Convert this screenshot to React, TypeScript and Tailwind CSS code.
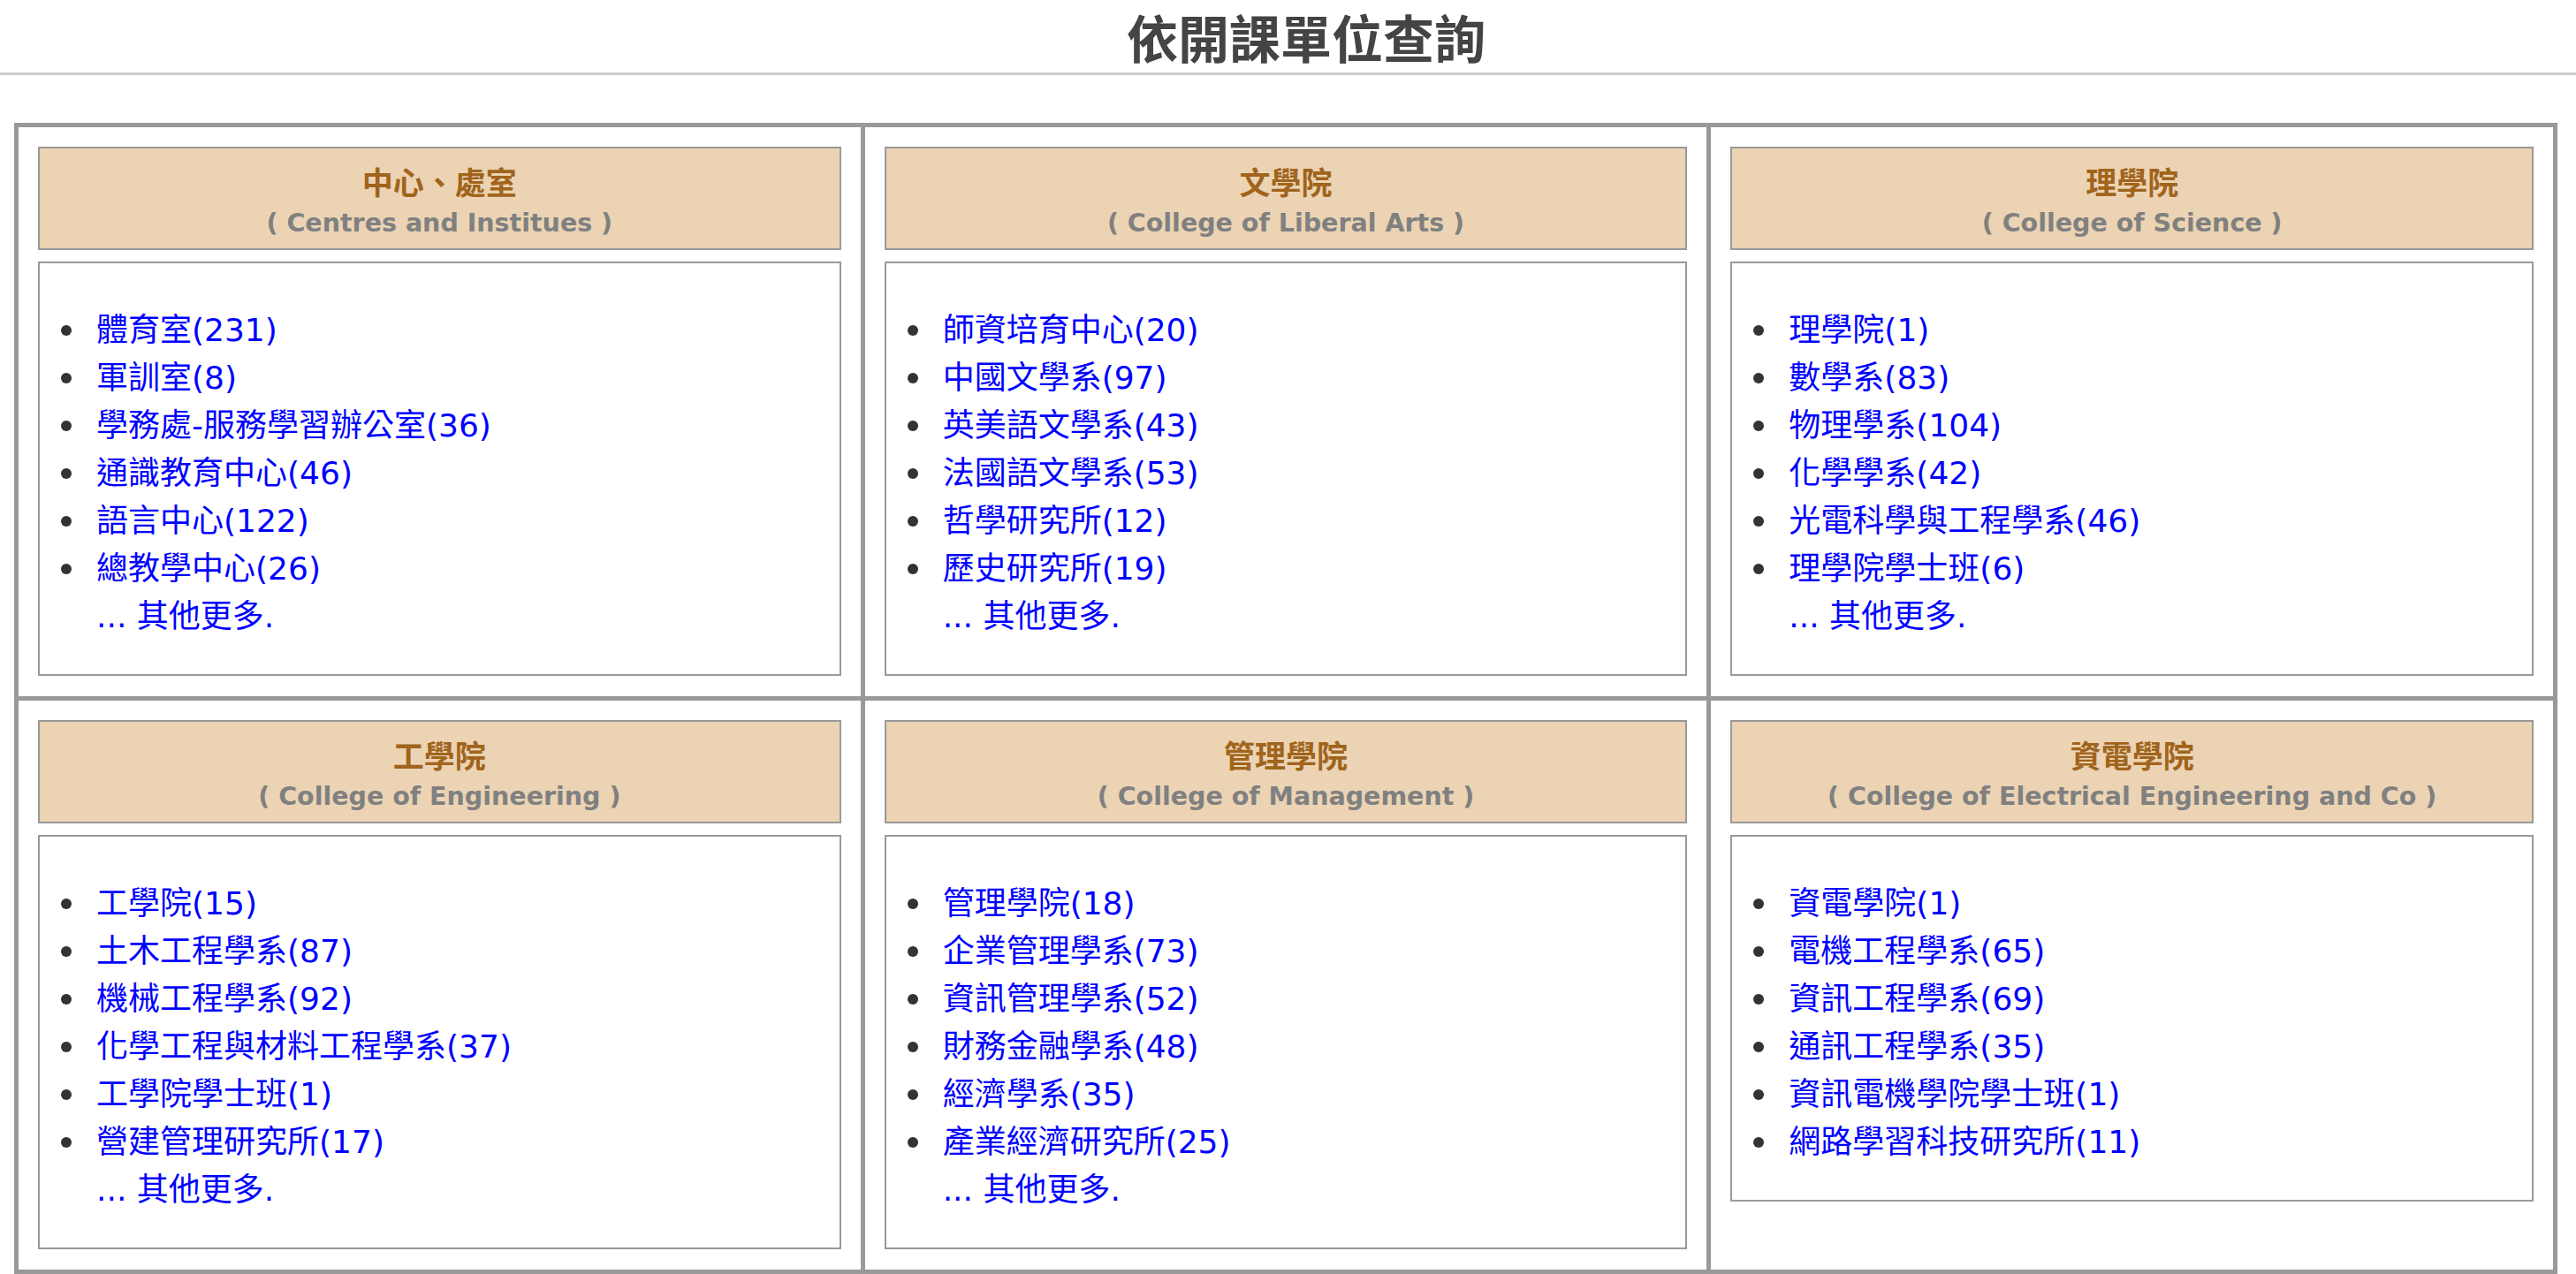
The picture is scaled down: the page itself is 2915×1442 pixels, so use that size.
type Unit = { name: string; count: number };
type College = { zh: string; en: string; units: Unit[]; more: boolean };

const colleges: College[] = [
  {
    zh: '中心、處室',
    en: 'Centres and Institues',
    more: true,
    units: [
      { name: '體育室', count: 231 },
      { name: '軍訓室', count: 8 },
      { name: '學務處-服務學習辦公室', count: 36 },
      { name: '通識教育中心', count: 46 },
      { name: '語言中心', count: 122 },
      { name: '總教學中心', count: 26 },
    ],
  },
  {
    zh: '文學院',
    en: 'College of Liberal Arts',
    more: true,
    units: [
      { name: '師資培育中心', count: 20 },
      { name: '中國文學系', count: 97 },
      { name: '英美語文學系', count: 43 },
      { name: '法國語文學系', count: 53 },
      { name: '哲學研究所', count: 12 },
      { name: '歷史研究所', count: 19 },
    ],
  },
  {
    zh: '理學院',
    en: 'College of Science',
    more: true,
    units: [
      { name: '理學院', count: 1 },
      { name: '數學系', count: 83 },
      { name: '物理學系', count: 104 },
      { name: '化學學系', count: 42 },
      { name: '光電科學與工程學系', count: 46 },
      { name: '理學院學士班', count: 6 },
    ],
  },
  {
    zh: '工學院',
    en: 'College of Engineering',
    more: true,
    units: [
      { name: '工學院', count: 15 },
      { name: '土木工程學系', count: 87 },
      { name: '機械工程學系', count: 92 },
      { name: '化學工程與材料工程學系', count: 37 },
      { name: '工學院學士班', count: 1 },
      { name: '營建管理研究所', count: 17 },
    ],
  },
  {
    zh: '管理學院',
    en: 'College of Management',
    more: true,
    units: [
      { name: '管理學院', count: 18 },
      { name: '企業管理學系', count: 73 },
      { name: '資訊管理學系', count: 52 },
      { name: '財務金融學系', count: 48 },
      { name: '經濟學系', count: 35 },
      { name: '產業經濟研究所', count: 25 },
    ],
  },
  {
    zh: '資電學院',
    en: 'College of Electrical Engineering and Co',
    more: false,
    units: [
      { name: '資電學院', count: 1 },
      { name: '電機工程學系', count: 65 },
      { name: '資訊工程學系', count: 69 },
      { name: '通訊工程學系', count: 35 },
      { name: '資訊電機學院學士班', count: 1 },
      { name: '網路學習科技研究所', count: 11 },
    ],
  },
];

function CollegeCell({ college }: { college: College }) {
  return (
    <div className="bg-white px-[22px] pt-[22px] pb-[23px]">
      {/* College title */}
      <div className="border-2 border-[#999] bg-[#ebd3b3] pt-[12px] pb-[5px] text-center">
        <div className="font-['Noto_Sans_CJK_TC',sans-serif] text-[35px] leading-[50px] font-bold text-[#a0641c]">
          {college.zh}
        </div>
        <div className="font-['DejaVu_Sans','Noto_Sans_CJK_TC',sans-serif] text-[28.5px] leading-[46px] font-bold text-[#808080] whitespace-nowrap">
          ( {college.en} )
        </div>
      </div>

      {/* Units */}
      <div className="mt-[13px] border-2 border-[#999] bg-white pt-[49px] pb-[38px] font-['DejaVu_Sans','Noto_Sans_CJK_TC',sans-serif] text-[36px] leading-[54px]">
        <ul>
          {college.units.map((u) => (
            <li key={u.name} className="flex items-center">
              <span className="ml-[24px] mr-[28px] h-[12px] w-[12px] shrink-0 rounded-full bg-[#333]" />
              <a href="#" className="text-[#0000ff] whitespace-nowrap">
                {u.name}({u.count})
              </a>
            </li>
          ))}
        </ul>
        {college.more && (
          <div className="pl-[64px]">
            <a href="#" className="text-[#0000ff]">
              ... 其他更多.
            </a>
          </div>
        )}
      </div>
    </div>
  );
}

export default function App() {
  return (
    <div className="min-h-screen bg-white">
      {/* Page title */}
      <div className="flex h-[82px] items-center justify-center pl-[41px]">
        <h1 className="font-['Noto_Sans_CJK_TC',sans-serif] text-[58px] leading-none font-bold text-[#444]">
          依開課單位查詢
        </h1>
      </div>
      <div className="h-[3px] bg-[#ccc]" />

      {/* College table */}
      <div className="mt-[54px] ml-[16px] w-[2878px] grid grid-cols-3 gap-[5px] bg-[#999] p-[5px]">
        {colleges.map((c) => (
          <CollegeCell key={c.zh} college={c} />
        ))}
      </div>
    </div>
  );
}
